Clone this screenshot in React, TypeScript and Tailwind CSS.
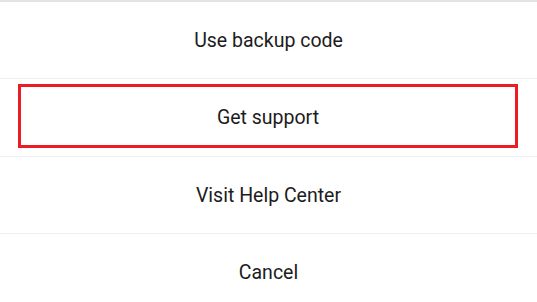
const rows = ['Use backup code', 'Get support', 'Visit Help Center', 'Cancel']

export default function App() {
  return (
    <div className="flex h-[302px] w-[537px] flex-col overflow-hidden border-t-2 border-[#e4e4e4] bg-white font-['Roboto',sans-serif] text-[19.5px] text-[#1c1c1c]">
      <div className="flex h-[77px] shrink-0 items-center justify-center border-b border-[#eeeeee] pt-[2px]">{rows[0]}</div>
      <div className="flex h-[78px] shrink-0 flex-col border-b border-[#eeeeee] pb-[8px] pl-[18px] pr-[19px] pt-[5px]">
        <div className="flex flex-1 items-center justify-center border-[3px] border-[#ec1c24] pt-[3px]">{rows[1]}</div>
      </div>
      <div className="flex h-[77px] shrink-0 items-center justify-center border-b border-[#eeeeee] pt-[1px]">{rows[2]}</div>
      <div className="flex h-[78px] shrink-0 items-center justify-center pb-[1px]">{rows[3]}</div>
    </div>
  )
}
